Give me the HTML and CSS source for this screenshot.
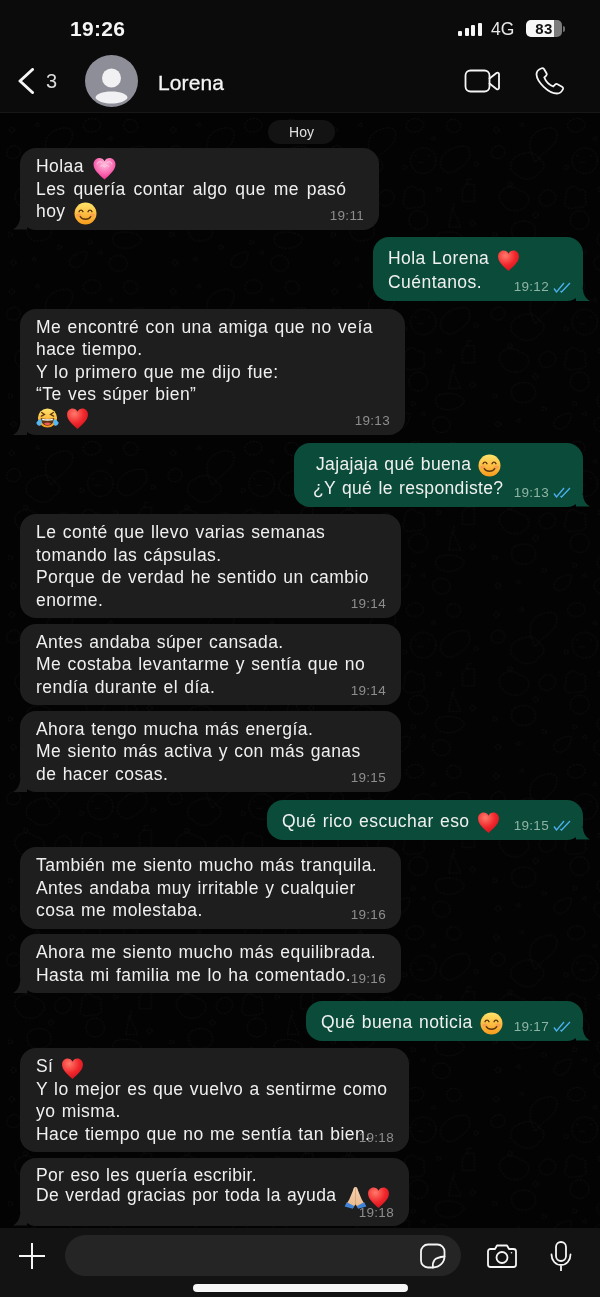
FILE: index.html
```html
<!DOCTYPE html>
<html lang="es">

<head>
	<title>Lorena</title>
	<meta charset="utf-8">
	<meta name="viewport" content="width=device-width, initial-scale=1.0">
	<link rel="stylesheet" href="styles.css">
</head>

<body>

	<!-- shared emoji -->
	<svg class="defs" aria-hidden="true">
		<defs>
			<radialGradient id="rojo" cx="35%" cy="25%" r="85%">
				<stop offset="0" stop-color="#ff7a6b" />
				<stop offset=".55" stop-color="#f1272c" />
				<stop offset="1" stop-color="#c80f1c" />
			</radialGradient>
			<radialGradient id="rosa" cx="50%" cy="30%" r="75%">
				<stop offset="0" stop-color="#ffc1de" />
				<stop offset=".6" stop-color="#fb62ae" />
				<stop offset="1" stop-color="#ea2a8c" />
			</radialGradient>
			<linearGradient id="amarillo" x1="0" y1="0" x2="0" y2="1">
				<stop offset="0" stop-color="#ffe36a" />
				<stop offset="1" stop-color="#f79a1c" />
			</linearGradient>
			<linearGradient id="piel" x1="0" y1="0" x2="0" y2="1">
				<stop offset="0" stop-color="#f7d3b0" />
				<stop offset="1" stop-color="#e8b88c" />
			</linearGradient>
			<symbol id="corazon" viewBox="0 0 22 22">
				<path fill="url(#rojo)" d="M11 21C6 16.600 1 12.600 1 7.200 1 3.800 3.500 1.500 6.300 1.500c2 0 3.700 1 4.700 3 1-2 2.700-3 4.700-3C18.500 1.500 21 3.800 21 7.200 21 12.600 16 16.600 11 21Z" />
			</symbol>
			<symbol id="corazon-rosa" viewBox="0 0 22 22">
				<path fill="url(#rosa)" d="M11 21.500C6 17 .5 12.600.5 7 .5 3.500 3.200 1 6.200 1c2 0 3.800 1 4.800 3 1-2 2.800-3 4.800-3 3 0 5.700 2.500 5.700 6 0 5.600-5.500 10-10.500 14.500Z" />
				<path fill="none" stroke="#ffd3e8" stroke-width=".9" d="M4 7c0-2 2.500-3.500 4.500-1.500M18 7c0-2-2.500-3.500-4.500-1.500M7 9c1.500-1.500 3-.5 4 .5 1-1 2.500-2 4-.5" />
			</symbol>
			<symbol id="sonrisa" viewBox="0 0 22 22">
				<circle cx="11" cy="11" r="10.500" fill="url(#amarillo)" />
				<ellipse cx="4.600" cy="12.500" rx="2.500" ry="1.600" fill="#f98a5a" opacity=".6" />
				<ellipse cx="17.400" cy="12.500" rx="2.500" ry="1.600" fill="#f98a5a" opacity=".6" />
				<path fill="none" stroke="#5b3410" stroke-width="1.300" stroke-linecap="round" d="M4.800 9.300c.8-2 3-2 3.800 0M13.400 9.300c.8-2 3-2 3.800 0" />
				<path fill="none" stroke="#5b3410" stroke-width="1.300" stroke-linecap="round" d="M6 14c2 3.400 8 3.400 10 0" />
			</symbol>
			<symbol id="risa" viewBox="0 0 24 22">
				<circle cx="12" cy="10.500" r="10" fill="url(#amarillo)" />
				<path fill="none" stroke="#5b3410" stroke-width="1.400" stroke-linecap="round" d="M5.600 8.500l3.200-1.700-2.900-2M18.400 8.500l-3.200-1.700 2.900-2" />
				<path fill="#5b3410" d="M5 10.500c4.500 1.200 9.500 1.200 14 0 0 5-3.200 8-7 8s-7-3-7-8Z" />
				<path fill="#fff" d="M6.300 11.300c3.600.8 7.800.8 11.400 0l-.3 1.500c-3.500.6-7.300.6-10.800 0Z" />
				<path fill="#ef5b5b" d="M8.300 16.300c2-1.500 5.400-1.500 7.400 0-2 2.200-5.400 2.200-7.400 0Z" />
				<path fill="#55b8f2" d="M.3 15.500c1.500-2.700 3.500-3.800 5.200-3.800.5 2 .7 5.300-.8 6.500-1.400.8-3.600.2-4.400-2.700ZM23.700 15.500c-1.500-2.700-3.500-3.800-5.200-3.800-.5 2-.7 5.300.8 6.500 1.400.8 3.600.2 4.400-2.700Z" />
			</symbol>
			<symbol id="manos" viewBox="0 0 22 22">
				<path fill="url(#piel)" d="M11 1C9.500 1 9 2.500 8.500 4.500L5 13 2.500 17l6.500 3.500 2-3 2 3 6.500-3.500L17 13 13.500 4.500C13 2.500 12.500 1 11 1Z" />
				<path fill="none" stroke="#c9966a" stroke-width=".6" d="M11 2v15" />
				<path fill="#3f83d8" d="M2.600 15.500 .6 19.500l7.900 2.200 1.200-2.500ZM19.400 15.500l2 4-7.900 2.200-1.200-2.500Z" />
			</symbol>
		</defs>
	</svg>

	<div class="telefono">

		<header class="cabecera">
			<div class="estado">
				<span class="hora">19:26</span>
				<div class="estado-derecha">
					<div class="senal">
						<i class="barra b1"></i><i class="barra b2"></i><i class="barra b3"></i><i class="barra b4"></i>
					</div>
					<span class="red">4G</span>
					<div class="bateria"><span>83</span></div>
					<i class="bateria-punta"></i>
				</div>
			</div>
			<div class="contacto">
				<svg class="atras" viewBox="0 0 16 26">
					<path d="M14.500 1.500 2 13l12.500 11.500" />
				</svg>
				<span class="sin-leer">3</span>
				<div class="avatar">
					<svg viewBox="0 0 52 52">
						<circle cx="26" cy="23" r="9.500" />
						<path d="M10 43c0-4 7-6.500 16-6.500S42 39 42 43c-3 4-9 5.500-16 5.500S13 47 10 43Z" />
					</svg>
				</div>
				<span class="nombre">Lorena</span>
				<svg class="ico-video" viewBox="0 0 36 24">
					<rect x="1.500" y="1.500" width="24" height="21" rx="5" />
					<path d="M25.500 9.500 32.500 4C33.500 3.300 35 3.800 35 5V19C35 20.200 33.500 20.700 32.500 20L25.500 14.500" />
				</svg>
				<svg class="ico-tel" viewBox="0 0 30 28">
					<path d="M6 1.500C3.500 2.500 1.500 4.500 1.500 7.500 2 15 13.500 26.500 22 26.500 25 26.500 27 24.500 28 22 28.300 21 28 20.300 27 19.700L22.500 17.200C21.600 16.700 20.800 16.900 20 17.700L18.300 19.500C14.500 18 10.800 14.500 9.300 10.500L11 8.800C11.800 8 12 7.200 11.500 6.300L9 2C8.400 1.200 7 1 6 1.500Z" />
				</svg>
			</div>
		</header>

		<main class="chat">
			<svg class="fondo" aria-hidden="true">
				<defs>
					<pattern id="garabatos" width="190" height="190" patternUnits="userSpaceOnUse" patternTransform="scale(.85)">
						<g class="garabato">
							<path d="M62 22c14-8 28-6 22 10-4 10-16 14-24 26C52 44 50 30 62 22Z" />
							<circle cx="118" cy="56" r="15" />
							<path d="M112 58h6M108 50h2M124 50h2" />
							<path d="M40 50c10-6 22-4 24 4 8 2 8 14 0 16-4 10-22 10-26 2-10-2-10-18 2-22Z" />
							<path d="M148 44c10-6 26-8 24 2 4 8-8 18-20 24-8 2-14-6-14-10 0-6 4-12 10-16Z" />
							<path d="M100 88c8-6 10 6 16 2 6 4 0 10 4 16-4 8-12 4-16 6-8 2-12-6-8-12 0-6 0-10 4-12Z" />
							<path d="M22 90c8-6 16-2 20 2 10 0 14 12 6 18-6 8-22 6-26-2-6-6-6-14 0-18Z" />
							<path d="M168 84h10v20h-14v-14ZM170 84v-6h6" />
							<path d="M70 92c6-4 12 0 14 6 0 8-8 14-16 10-6-6-4-12 2-16Z" />
							<circle cx="112" cy="126" r="11" />
							<path d="M36 130c10-6 24-2 24 8 2 10-10 14-20 12-8-2-12-16-4-20Z" />
							<path d="M152 112l10 22h-14ZM154 106v6" />
							<path d="M136 142c10-4 26-2 30 6 0 8-16 14-26 10-8-2-10-12-4-16Z" />
							<path d="M86 168c8-4 14-6 16-4 0 8-4 16-12 18-8 0-12-6-4-14Z" />
							<path d="M130 172c4-6 14-6 18 0 4 6 0 14-8 14-8 0-14-8-10-14Z" />
							<path d="M12 40c6-4 12 0 12 6s-8 10-14 6c-4-4-2-10 2-12Z" />
							<path d="M100 10c6-6 16-4 18 2 2 6-6 12-14 10-6-2-8-8-4-12Z" />
							<path d="M150 8c6-2 12 2 12 8 0 6-8 8-12 6-6-4-6-12 0-14Z" />
							<circle cx="14" cy="20" r="3" />
							<circle cx="30" cy="84" r="2.500" />
							<circle cx="96" cy="64" r="2.500" />
							<circle cx="136" cy="90" r="2.500" />
							<circle cx="60" cy="120" r="3" />
							<circle cx="12" cy="143" r="2.500" />
							<circle cx="176" cy="130" r="3" />
							<circle cx="70" cy="158" r="2.500" />
							<circle cx="16" cy="176" r="3" />
							<circle cx="106" cy="152" r="2.500" />
							<circle cx="44" cy="14" r="2" />
							<circle cx="130" cy="30" r="2" />
							<circle cx="180" cy="60" r="2.500" />
							<circle cx="40" cy="172" r="2" />
							<circle cx="118" cy="164" r="2" />
						</g>
					</pattern>
				</defs>
				<rect width="100%" height="100%" fill="url(#garabatos)" />
			</svg>

			<div class="fecha">Hoy</div>

			<div class="msg recibido cola ancho-359">
				Holaa <svg class="emoji"><use href="#corazon-rosa" /></svg><br>
				Les quería contar algo que me pasó<br>
				hoy <svg class="emoji"><use href="#sonrisa" /></svg>
				<span class="meta">19:11</span>
			</div>

			<div class="msg enviado cola grupo ancho-210">
				Hola Lorena <svg class="emoji"><use href="#corazon" /></svg><br>
				Cuéntanos.
				<span class="meta">19:12 <svg class="visto" viewBox="0 0 18 11"><path d="M1 6.500 3.500 10 11 1M7.500 9 8.500 10 17 1" /></svg></span>
			</div>

			<div class="msg recibido cola grupo ancho-385">
				Me encontré con una amiga que no veía<br>
				hace tiempo.<br>
				Y lo primero que me dijo fue:<br>
				“Te ves súper bien”<br>
				<svg class="emoji primero"><use href="#risa" /></svg> <svg class="emoji"><use href="#corazon" /></svg>
				<span class="meta">19:13</span>
			</div>

			<div class="msg enviado cola grupo ancho-289">
				<span class="sangria">Jajajaja qué buena <svg class="emoji"><use href="#sonrisa" /></svg></span><br>
				¿Y qué le respondiste?
				<span class="meta">19:13 <svg class="visto" viewBox="0 0 18 11"><path d="M1 6.500 3.500 10 11 1M7.500 9 8.500 10 17 1" /></svg></span>
			</div>

			<div class="msg recibido grupo ancho-381">
				Le conté que llevo varias semanas<br>
				tomando las cápsulas.<br>
				Porque de verdad he sentido un cambio<br>
				enorme.
				<span class="meta">19:14</span>
			</div>

			<div class="msg recibido ancho-381">
				Antes andaba súper cansada.<br>
				Me costaba levantarme y sentía que no<br>
				rendía durante el día.
				<span class="meta">19:14</span>
			</div>

			<div class="msg recibido cola ancho-381">
				Ahora tengo mucha más energía.<br>
				Me siento más activa y con más ganas<br>
				de hacer cosas.
				<span class="meta">19:15</span>
			</div>

			<div class="msg enviado cola grupo ancho-316">
				Qué rico escuchar eso <svg class="emoji"><use href="#corazon" /></svg>
				<span class="meta">19:15 <svg class="visto" viewBox="0 0 18 11"><path d="M1 6.500 3.500 10 11 1M7.500 9 8.500 10 17 1" /></svg></span>
			</div>

			<div class="msg recibido grupo ancho-381">
				También me siento mucho más tranquila.<br>
				Antes andaba muy irritable y cualquier<br>
				cosa me molestaba.
				<span class="meta">19:16</span>
			</div>

			<div class="msg recibido cola ancho-381">
				Ahora me siento mucho más equilibrada.<br>
				Hasta mi familia me lo ha comentado.
				<span class="meta">19:16</span>
			</div>

			<div class="msg enviado cola grupo ancho-277">
				Qué buena noticia <svg class="emoji"><use href="#sonrisa" /></svg>
				<span class="meta">19:17 <svg class="visto" viewBox="0 0 18 11"><path d="M1 6.500 3.500 10 11 1M7.500 9 8.500 10 17 1" /></svg></span>
			</div>

			<div class="msg recibido grupo ancho-389">
				Sí <svg class="emoji"><use href="#corazon" /></svg><br>
				Y lo mejor es que vuelvo a sentirme como<br>
				yo misma.<br>
				Hace tiempo que no me sentía tan bien.
				<span class="meta">19:18</span>
			</div>

			<div class="msg recibido cola ultimo ancho-389">
				Por eso les quería escribir.<br>
				De verdad gracias por toda la ayuda <svg class="emoji"><use href="#manos" /></svg><svg class="emoji pegado"><use href="#corazon" /></svg>
				<span class="meta">19:18</span>
			</div>
		</main>

		<footer class="barra-texto">
			<div class="fila-texto">
				<svg class="ico-mas" viewBox="0 0 26 26">
					<path d="M13 0v26M0 13h26" />
				</svg>
				<div class="campo">
					<svg class="ico-sticker" viewBox="0 0 26 26">
						<path d="M8 1.500h9.500a7 7 0 0 1 7 7V13C24.500 19.500 19.500 24.500 13 24.500H8a7 7 0 0 1-7-7V8.500a7 7 0 0 1 7-7Z" />
						<path d="M13 24.500C12.500 21.500 13 19 14.500 17S19.500 14 24.500 13.500" />
					</svg>
				</div>
				<svg class="ico-camara" viewBox="0 0 30 24">
					<path d="M3.500 5H8L10 1.500H20L22 5H26.500A2.500 2.500 0 0 1 29 7.500V20.500A2.500 2.500 0 0 1 26.500 23H3.500A2.500 2.500 0 0 1 1 20.500V7.500A2.500 2.500 0 0 1 3.500 5Z" />
					<circle cx="15" cy="13.500" r="5.500" />
					<circle class="punto" cx="24.500" cy="8.800" r=".8" />
				</svg>
				<svg class="ico-mic" viewBox="0 0 22 30">
					<rect x="6" y="1" width="10" height="19" rx="5" />
					<path d="M1.500 13.500C1.500 19.500 5.500 24 11 24S20.500 19.500 20.500 13.500M11 24V30" />
				</svg>
			</div>
			<div class="home"></div>
		</footer>

	</div>

</body>

</html>
```

FILE: styles.css
```css
body {
	margin: 0;
	padding: 0;
	background-color: #040404;
	font-family: "Liberation Sans", Arial, sans-serif;
	color: #f0f0f0;
}

.defs {
	position: absolute;
	width: 0;
	height: 0;
}

.telefono {
	width: 600px;
	height: 1297px;
	display: flex;
	flex-direction: column;
	overflow: hidden;
	filter: blur(.3px);
}

/* header */

.cabecera {
	background-color: #0b0b0b;
	border-bottom: 1px solid #171717;
	height: 113px;
	box-sizing: border-box;
}

.estado {
	height: 55px;
	box-sizing: border-box;
	padding: 3px 38px 0 70px;
	display: flex;
	align-items: center;
}

.hora {
	font-size: 21px;
	font-weight: 600;
	letter-spacing: .3px;
	color: #f5f5f5;
}

.estado-derecha {
	margin-left: auto;
	display: flex;
	align-items: center;
}

.senal {
	display: flex;
	align-items: flex-end;
	gap: 2.400px;
	height: 13px;
}

.barra {
	display: block;
	width: 4.200px;
	background-color: #f5f5f5;
	border-radius: 1px;
}

.b1 { height: 5px; }
.b2 { height: 8px; }
.b3 { height: 11px; }
.b4 { height: 13px; }

.red {
	font-size: 17.500px;
	margin-left: 9px;
	color: #e8e8e8;
	width: 35px;
}

.bateria {
	width: 36px;
	height: 17px;
	margin-top: -1px;
	border-radius: 5px;
	background: linear-gradient(to right, #f7f7f7 78%, #7c7c7c 78%);
	display: flex;
	align-items: center;
	justify-content: center;
}

.bateria span {
	font-size: 15px;
	font-weight: 700;
	color: #111;
	letter-spacing: .3px;
}

.bateria-punta {
	display: block;
	width: 2px;
	height: 6px;
	margin-left: 1px;
	margin-right: -3px;
	background-color: #6f6f6f;
	border-radius: 0 2px 2px 0;
}

.contacto {
	height: 58px;
	box-sizing: border-box;
	padding: 0 35px 6px 18px;
	display: flex;
	align-items: center;
}

.atras {
	width: 16px;
	height: 26px;
	fill: none;
	stroke: #f5f5f5;
	stroke-width: 3;
	stroke-linecap: round;
	stroke-linejoin: round;
}

.sin-leer {
	font-size: 20px;
	color: #dcdcdc;
	margin-left: 12px;
	width: 39px;
}

.avatar {
	width: 53px;
	height: 52px;
	border-radius: 50%;
	background-color: #8e8e99;
	overflow: hidden;
}

.avatar svg {
	display: block;
	width: 100%;
	height: 100%;
	fill: #f1f1f3;
}

.nombre {
	font-size: 21px;
	font-weight: 500;
	letter-spacing: .1px;
	margin-left: 20px;
	padding-top: 4px;
	color: #f5f5f5;
	-webkit-text-stroke: .3px #f5f5f5;
}

.ico-video,
.ico-tel,
.ico-sticker,
.ico-camara,
.ico-mic {
	fill: none;
	stroke: #f5f5f5;
	stroke-width: 1.800;
	stroke-linecap: round;
	stroke-linejoin: round;
}

.ico-video {
	width: 36px;
	height: 24px;
	margin-left: auto;
}

.ico-tel {
	width: 30px;
	height: 28px;
	margin-left: 35px;
}

/* chat */

.chat {
	flex: 1;
	position: relative;
	background-color: #030303;
	padding: 7px 17px 0 20px;
	display: flex;
	flex-direction: column;
	overflow: hidden;
}

.fondo {
	position: absolute;
	left: 0;
	top: 0;
	width: 100%;
	height: 100%;
}

.garabato {
	fill: none;
	stroke: #111;
	stroke-width: .8;
	stroke-dasharray: 2.500 1.500;
}

.fecha {
	position: relative;
	align-self: center;
	width: 67px;
	height: 24px;
	line-height: 24px;
	text-align: center;
	font-size: 14px;
	color: #e0e0e0;
	background-color: #131313;
	border-radius: 12px;
	margin-bottom: -1.500px;
}

.msg {
	position: relative;
	box-sizing: border-box;
	font-size: 17.500px;
	line-height: 22.500px;
	letter-spacing: .45px;
	word-spacing: 1px;
	border-radius: 16px;
	margin-top: 5.500px;
	flex-shrink: 0;
}

.msg.grupo {
	margin-top: 7.500px;
}

.recibido {
	align-self: flex-start;
	background-color: #1e1e1f;
	padding: 7px 14px 7px 16px;
}

.enviado {
	align-self: flex-end;
	background-color: #0a4c39;
	line-height: 24px;
	padding: 9px 14px 7px 15px;
}

.ultimo {
	line-height: 20.500px;
	letter-spacing: .35px;
	padding-bottom: 20px;
}

.ultimo .meta {
	bottom: 5px;
}

.cola::after {
	content: "";
	position: absolute;
	bottom: 0;
	width: 14px;
	height: 12px;
	background-color: inherit;
}

.recibido.cola::after {
	left: -7px;
	clip-path: path("M7 0C7 5 4 10 0 12L14 12L14 0Z");
}

.enviado.cola::after {
	right: -7px;
	clip-path: path("M7 0C7 5 10 10 14 12L0 12L0 0Z");
}

.ancho-359 {
	width: 359px;
	word-spacing: 2.500px;
}

.ancho-385 { width: 385px; }
.ancho-381 { width: 381px; }
.ancho-389 { width: 389px; }
.ancho-210 { width: 210px; }
.ancho-316 { width: 316px; }
.ancho-277 { width: 277px; }

.ancho-289 {
	width: 289px;
	padding-left: 19px;
	letter-spacing: .35px;
}

.sangria {
	margin-left: 3px;
}

.emoji {
	width: 23px;
	height: 23px;
	vertical-align: -3.500px;
	margin: -4px 0 -4px 1px;
}

.emoji.primero {
	margin-left: 0;
}

.emoji.pegado {
	margin-left: 0;
}

.meta {
	position: absolute;
	right: 15px;
	bottom: 6px;
	display: flex;
	align-items: center;
	gap: 4px;
	font-size: 13.500px;
	line-height: 16px;
	letter-spacing: .3px;
	word-spacing: 0;
	color: #8d8d8f;
}

.enviado .meta {
	right: 12px;
	color: #8fb3a4;
}

.visto {
	width: 18px;
	height: 11px;
	fill: none;
	stroke: #4db0ee;
	stroke-width: 1.300;
}

/* composer */

.barra-texto {
	height: 69px;
	box-sizing: border-box;
	background-color: #131313;
	padding-top: 7px;
	position: relative;
}

.fila-texto {
	display: flex;
	align-items: center;
	height: 41px;
	padding-left: 19px;
}

.ico-mas {
	width: 26px;
	height: 26px;
	fill: none;
	stroke: #f5f5f5;
	stroke-width: 2;
}

.campo {
	width: 396px;
	height: 41px;
	margin-left: 20px;
	background-color: #252525;
	border-radius: 21px;
	display: flex;
	align-items: center;
	justify-content: flex-end;
	padding-right: 15px;
	box-sizing: border-box;
}

.ico-sticker {
	width: 26px;
	height: 26px;
}

.ico-camara {
	width: 30px;
	height: 24px;
	margin-left: 26px;
}

.ico-camara .punto {
	fill: #f5f5f5;
	stroke: none;
}

.ico-mic {
	width: 22px;
	height: 30px;
	margin-left: 33px;
}

.home {
	width: 215px;
	height: 8px;
	margin: 8px auto 0;
	background-color: #f7f7f7;
	border-radius: 4px;
}
```
